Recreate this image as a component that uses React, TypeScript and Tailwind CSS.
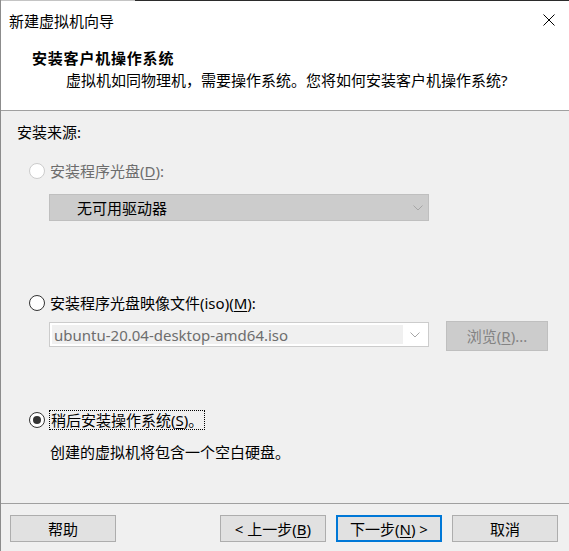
import React from 'react';

const font = "font-['Noto_Sans','Noto_Sans_CJK_SC',sans-serif]";

const Radio: React.FC<{ checked?: boolean; disabled?: boolean }> = ({ checked, disabled }) => (
  <span
    className={`w-[16px] h-[16px] rounded-full border flex items-center justify-center shrink-0 bg-white ${
      disabled ? 'border-[#cccccc]' : 'border-[#333333]'
    }`}
  >
    {checked && <span className="w-[8px] h-[8px] rounded-full bg-[#333333]" />}
  </span>
);

const Chevron: React.FC = () => (
  <svg width="10" height="6" viewBox="0 0 10 6" className="shrink-0">
    <path d="M0.5 0.5 L5 5 L9.5 0.5" fill="none" stroke="#a6a6a6" strokeWidth="1" />
  </svg>
);

const Button: React.FC<{ children: React.ReactNode; primary?: boolean }> = ({ children, primary }) => (
  <div
    className={`w-[106px] h-[27px] flex items-center justify-center bg-[#e1e1e1] text-black ${
      primary ? 'border-2 border-[#0078d7]' : 'border border-[#adadad]'
    }`}
  >
    {children}
  </div>
);

const U: React.FC<{ children: React.ReactNode }> = ({ children }) => (
  <span className="underline underline-offset-2 decoration-1">{children}</span>
);

export default function App() {
  return (
    <div className={`w-[569px] h-[551px] flex flex-col bg-[#f0f0f0] border-l border-[#8c8c8c] text-[15px] leading-[20px] text-black ${font}`}>
      <div className="flex h-px shrink-0">
        <div className="w-[134px] bg-[#c4c4c4]" />
        <div className="flex-1 bg-[#2b2b2b]" />
      </div>

      {/* header */}
      <div className="h-[110px] shrink-0 bg-white border-b border-[#a0a0a0] flex flex-col">
        <div className="flex items-start justify-between pt-[10px] pl-[8px] pr-[14px]">
          <span>新建虚拟机向导</span>
          <svg width="12" height="12" viewBox="0 0 12 12" className="mt-[3px]">
            <path d="M0.5 0.5 L11.5 11.5 M11.5 0.5 L0.5 11.5" stroke="#000" strokeWidth="1" />
          </svg>
        </div>
        <div className="pl-[31px] mt-[17px] font-bold tracking-[0.8px]">安装客户机操作系统</div>
        <div className="pl-[65px] mt-[2px]">虚拟机如同物理机，需要操作系统。您将如何安装客户机操作系统?</div>
      </div>

      {/* body */}
      <div className="h-[392px] shrink-0 flex flex-col pt-[11px]">
        <div className="pl-[16px]">安装来源:</div>

        <div className="flex items-center gap-[5px] pl-[28px] mt-[19px] text-[#6d6d6d]">
          <Radio disabled />
          <span>
            安装程序光盘(<U>D</U>):
          </span>
        </div>

        <div className="ml-[48px] mt-[13px] w-[380px] h-[27px] bg-[#cccccc] border border-[#bfbfbf] flex items-center justify-between pl-[27px] pr-[5px]">
          <span>无可用驱动器</span>
          <Chevron />
        </div>

        <div className="flex items-center gap-[5px] pl-[28px] mt-[72px]">
          <Radio />
          <span>
            安装程序光盘映像文件(iso)(<U>M</U>):
          </span>
        </div>

        <div className="flex items-start ml-[48px] mt-[8px]">
          <div className="mt-[1px] w-[380px] h-[25px] bg-white border border-[#cccccc] flex items-center p-[2px]">
            <div className="flex-1 h-full bg-[#f0f0f0] flex items-center pl-[2px] text-[#6d6d6d]">
              ubuntu-20.04-desktop-amd64.iso
            </div>
            <div className="w-[23px] flex justify-center">
              <Chevron />
            </div>
          </div>
          <div className="ml-[17px] w-[102px] h-[30px] bg-[#cccccc] border border-[#bfbfbf] flex items-center justify-center text-[#838383]">
            浏览(<U>R</U>)...
          </div>
        </div>

        <div className="flex items-center gap-[4px] pl-[28px] mt-[59px]">
          <Radio checked />
          <span className="border border-dotted border-black px-[1px] leading-[18px]">
            稍后安装操作系统(<U>S</U>)。
          </span>
        </div>

        <div className="pl-[49px] mt-[12px]">创建的虚拟机将包含一个空白硬盘。</div>
      </div>

      <div className="h-px shrink-0 bg-[#a0a0a0]" />

      {/* buttons */}
      <div className="flex items-start pt-[11px] pl-[9px]">
        <Button>帮助</Button>
        <div className="flex gap-[10px] ml-[104px]">
          <Button>
            &lt; 上一步(<U>B</U>)
          </Button>
          <Button primary>
            下一步(<U>N</U>) &gt;
          </Button>
          <Button>取消</Button>
        </div>
      </div>
    </div>
  );
}
